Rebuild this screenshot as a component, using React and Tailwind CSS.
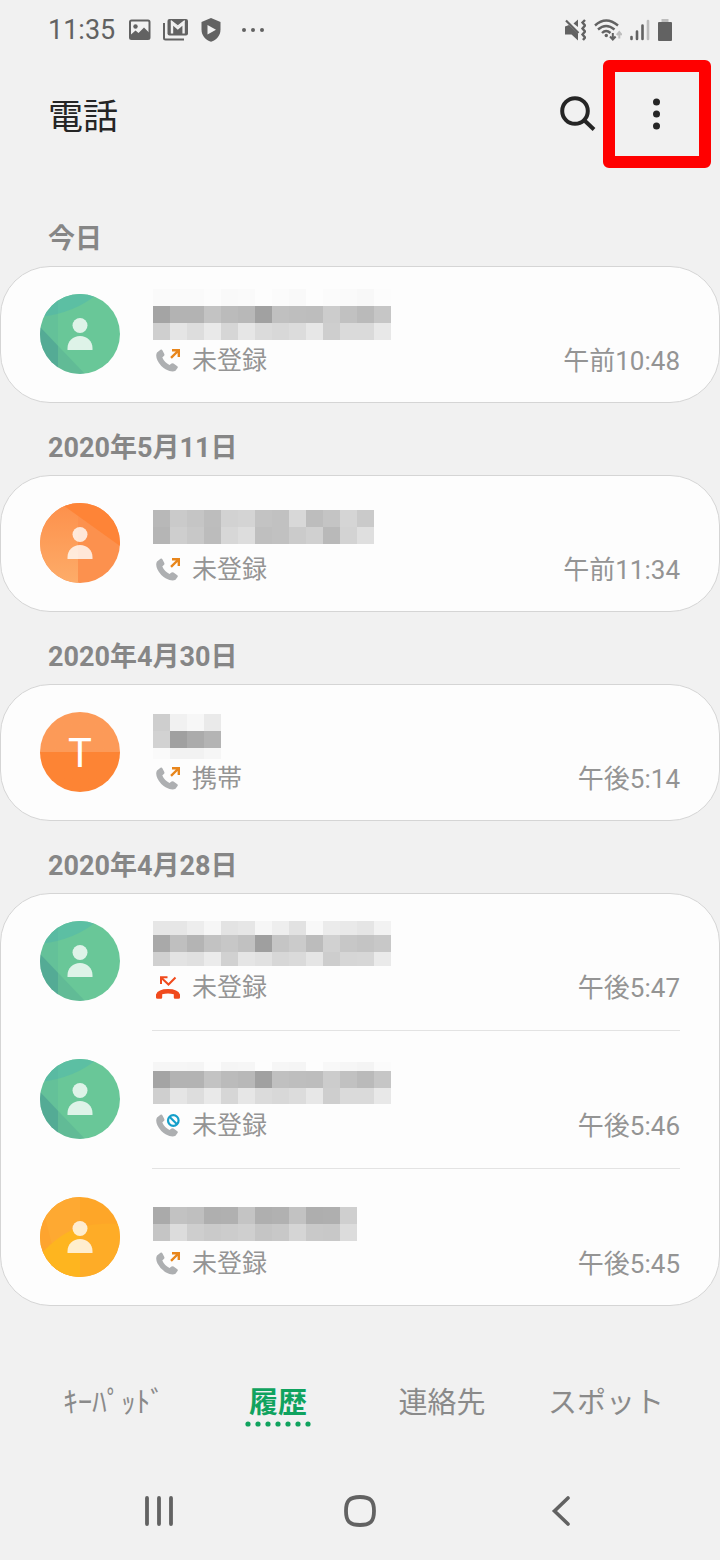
import React from "react";

// Blurred caller names: rows of grey levels, one cell is 17px wide.
// y and h are relative to the name area.
const numberMosaic = {
  dark: ["a4", "b3", "b3", "c3", "bb", "b8", "a1", "c0", "be", "bd", "cc", "c1", "ba", "c6"],
  light: ["cf", "e5", "dd", "e9", "d6", "e6", "db", "d8", "dc", "e7", "ce", "da", "da", "e8"],
};

const groups = [
  {
    title: "今日",
    calls: [
      {
        avatar: "green",
        type: "outgoing",
        label: "未登録",
        time: "午前10:48",
        mosaic: [
          { y: 0, h: 17, cells: ["fa", "fa", "fa", "fc", "f9", "fa", "fd", "fb", "f9", "fd", "fb", "fa", "f8", "fc"] },
          { y: 17, h: 17, cells: numberMosaic.dark },
          { y: 34, h: 17, cells: numberMosaic.light },
        ],
      },
    ],
  },
  {
    title: "2020年5月11日",
    calls: [
      {
        avatar: "orange",
        type: "outgoing",
        label: "未登録",
        time: "午前11:34",
        mosaic: [
          { y: 12, h: 17, cells: ["b8", "ca", "c5", "bd", "d2", "d4", "c3", "c1", "d8", "bd", "c4", "d5", "ca"] },
          { y: 29, h: 17, cells: ["b5", "ce", "c8", "bc", "d7", "dd", "bf", "c1", "cb", "d0", "b9", "d3", "df"] },
        ],
      },
    ],
  },
  {
    title: "2020年4月30日",
    calls: [
      {
        avatar: "letter",
        type: "outgoing",
        label: "携帯",
        time: "午後5:14",
        mosaic: [
          { y: 7, h: 17, cells: ["ce", "f1", "f7", "ea"] },
          { y: 24, h: 17, cells: ["d2", "a0", "ab", "b4"] },
          { y: 41, h: 11, cells: ["fa", "f2", "f2", "f6"] },
        ],
      },
    ],
  },
  {
    title: "2020年4月28日",
    calls: [
      {
        avatar: "green",
        type: "missed",
        label: "未登録",
        time: "午後5:47",
        mosaic: [
          { y: 5, h: 14, cells: ["e6", "e6", "ed", "f6", "e3", "e6", "f6", "ee", "e2", "f8", "eb", "e9", "e5", "f2"] },
          { y: 19, h: 17, cells: ["a9", "bf", "b4", "c2", "c7", "c1", "9f", "c5", "cb", "bc", "d1", "c7", "c4", "c8"] },
          { y: 36, h: 14, cells: ["d0", "e3", "e0", "eb", "d1", "e5", "e1", "d7", "da", "e5", "cd", "d6", "d7", "ea"] },
        ],
      },
      {
        avatar: "green",
        type: "blocked",
        label: "未登録",
        time: "午後5:46",
        mosaic: [
          { y: 8, h: 9, cells: ["f6", "f6", "f5", "fc", "f5", "f6", "fd", "f6", "f5", "fd", "f8", "f6", "f4", "fb"] },
          { y: 17, h: 17, cells: numberMosaic.dark },
          { y: 34, h: 16, cells: numberMosaic.light },
        ],
      },
      {
        avatar: "amber",
        type: "outgoing",
        label: "未登録",
        time: "午後5:45",
        mosaic: [
          { y: 15, h: 17, cells: ["aa", "c2", "bf", "af", "b0", "c4", "af", "b1", "c2", "ae", "af", "cf"] },
          { y: 32, h: 17, cells: ["c5", "dc", "ce", "ca", "cc", "cf", "c5", "c8", "d5", "c9", "c8", "dc"] },
        ],
      },
    ],
  },
];

const tabs = ["ｷｰﾊﾟｯﾄﾞ", "履歴", "連絡先", "スポット"];

const StatusBar = () => (
  <div className="flex h-[60px] items-center justify-between px-12 text-[#626262]">
    <div className="flex items-center gap-3">
      <span className="text-[27px]">11:35</span>
      <svg width="24" height="22" viewBox="0 0 24 22" fill="none">
        <rect x="3" y="1.500" width="19.500" height="18.500" rx="1.500" stroke="currentColor" strokeWidth="2" />
        <circle cx="8.500" cy="7.500" r="2.200" fill="currentColor" />
        <path d="M4 15.500l4.500-4 3 2.500 5.500-5.500 5 5V20H4z" fill="currentColor" />
      </svg>
      <svg width="26" height="24" viewBox="0 0 26 24" fill="none">
        <path d="M1 5v15Q1 21.500 2.500 21.500H21" stroke="currentColor" strokeWidth="2" />
        <rect x="4.500" y="1" width="20.500" height="16.500" rx="2" fill="currentColor" />
        <path d="M9 15.500V5L14.800 10.200L20.600 5V15.500" stroke="#f1f1f1" strokeWidth="2.400" />
        <path d="M8 2.800L14.800 8L21.600 2.800" stroke="#f1f1f1" strokeWidth="1.200" />
      </svg>
      <svg width="20" height="24" viewBox="0 0 20 24">
        <path d="M10 0l9.500 4v7.500c0 6-4 10.500-9.500 12.300C4.500 22 .5 17.500.5 11.500V4z" fill="currentColor" />
        <path d="M6.500 7v9.500l8.500-4.750z" fill="#f1f1f1" />
      </svg>
      <svg className="ml-2" width="24" height="6" viewBox="0 0 24 6" fill="currentColor">
        <circle cx="3" cy="3" r="2" />
        <circle cx="12" cy="3" r="2" />
        <circle cx="21" cy="3" r="2" />
      </svg>
    </div>
    <div className="flex items-center gap-2">
      <svg width="22" height="22" viewBox="0 0 22 22" fill="none">
        <path d="M1 7.500L5 6L14 14.500V21.500L7.500 15.500H1z" fill="currentColor" />
        <path d="M2 1.500L14.500 14" stroke="currentColor" strokeWidth="2.200" />
        <path d="M9.500 4.500L14 .5V8z" fill="currentColor" />
        <path d="M21 1l-2.500 2.500 2.500 3-2.500 3 2.500 3-2.500 3 2.500 3-2 2.500" stroke="currentColor" strokeWidth="2.400" />
      </svg>
      <svg width="28" height="22" viewBox="0 0 28 22" fill="none">
        <path d="M1 6.500Q12 -3.500 24 6.500M4 10.500Q12 3.500 20.500 10.500M8 14Q12 10 16.500 14" stroke="currentColor" strokeWidth="2.400" />
        <circle cx="12.300" cy="16.500" r="1.700" fill="currentColor" />
        <path d="M18.800 14v6.500M16 17.500l2.800 3 2.800-3" stroke="currentColor" strokeWidth="2" />
        <path d="M25.300 19.500v-6M22.800 16l2.500-3 2.500 3" stroke="#bdbdbd" strokeWidth="2" />
      </svg>
      <svg width="20" height="22" viewBox="0 0 20 22" strokeWidth="2.600" strokeLinecap="round">
        <path d="M1.500 18v2M7 12.500v7.500M12.500 6.500V20" stroke="currentColor" />
        <path d="M18 2V20" stroke="#bdbdbd" />
      </svg>
      <svg width="14" height="22" viewBox="0 0 14 22">
        <rect x="3.500" width="7" height="4" fill="#bdbdbd" />
        <rect y="3" width="14" height="19" rx="1" fill="currentColor" />
      </svg>
    </div>
  </div>
);

const Header = () => (
  <header className="flex items-center pl-12 pr-[9px]">
    <h1 className="flex-1 pt-2 text-[35px] text-[#252525]">電話</h1>
    <button aria-label="検索" className="mr-[7px]">
      <svg width="36" height="36" viewBox="0 0 36 36" fill="none" stroke="#252525" strokeWidth="4">
        <circle cx="15" cy="15" r="12.800" />
        <path d="M24 24l10 9.500" />
      </svg>
    </button>
    <button
      aria-label="その他のオプション"
      className="flex size-[108px] items-center justify-center rounded-md border-12 border-[#ff0000]"
    >
      <svg width="8" height="32" viewBox="0 0 8 32" fill="#252525">
        <circle cx="3.500" cy="4" r="3.500" />
        <circle cx="3.500" cy="16" r="3.500" />
        <circle cx="3.500" cy="28" r="3.500" />
      </svg>
    </button>
  </header>
);

const Person = () => (
  <g fill="#fff" fillOpacity="0.78">
    <circle cx="40" cy="31.500" r="7.500" />
    <path d="M27.500 56v-2c0-7 5.500-12 12.500-12s12.500 5 12.500 12v2z" />
  </g>
);

const Avatar = ({ kind }) => {
  if (kind === "letter") {
    return (
      <div className="flex size-20 shrink-0 items-center justify-center rounded-full bg-linear-to-b from-[#fc9a58] from-50% to-[#fd8434] to-50% pt-1 text-[40px] text-white">
        T
      </div>
    );
  }
  return (
    <svg className="size-20 shrink-0 rounded-full" viewBox="0 0 80 80">
      {kind === "green" && (
        <>
          <rect width="80" height="80" fill="#69c798" />
          <path d="M0 0H57Q35 19 0 23z" fill="#5cbfa3" />
          <path d="M0 0H18V80H0z" fill="#50a9a0" fillOpacity="0.2" />
          <path d="M0 33L45 80H0z" fill="#55ab94" fillOpacity="0.4" />
          <path d="M0 33L18 52V80H0z" fill="#4ea294" fillOpacity="0.6" />
        </>
      )}
      {kind === "orange" && (
        <>
          <defs>
            <linearGradient id="orangeLeft" x1="0" y1="0" x2="0" y2="1">
              <stop offset="0" stopColor="#fd904b" />
              <stop offset="1" stopColor="#fdac69" />
            </linearGradient>
          </defs>
          <rect width="80" height="80" fill="#fc914e" />
          <rect width="38" height="80" fill="url(#orangeLeft)" />
          <path d="M20 0L80 43V0z" fill="#fe8437" />
        </>
      )}
      {kind === "amber" && (
        <>
          <rect width="80" height="80" fill="#fea628" />
          <rect width="40" height="80" fill="#fea932" />
          <path d="M0 0L20 80H0z" fill="#fea02b" fillOpacity="0.5" />
          <path d="M0 58Q20 36 40 30V80H0z" fill="#feb51f" />
          <path d="M40 30Q60 25 80 27V80H40z" fill="#feac27" />
        </>
      )}
      <Person />
    </svg>
  );
};

const Handset = () => (
  <path
    d="M1 3.500L4.500 .8Q5.800 .2 6.500 1.500L8.300 5Q8.800 6.200 7.800 7L6.300 8.500Q8.500 13.500 13.500 16L15.500 14.500Q16.500 13.800 17.500 14.500L21 17Q22.300 18 21.500 19L19.500 21.700Q16 23.500 10 20.500Q4.500 17.500 1.500 11.500Q-.8 6.500 1 3.500z"
    fill="#adafb1"
  />
);

const CallIcon = ({ type }) => (
  <svg width="24" height="24" viewBox="0 0 24 24" fill="none" className="shrink-0">
    {type === "missed" ? (
      <>
        <path
          d="M0 21.500V18.500Q2 13 12 13T24 18.500V21.500Q24 22.800 22.500 22.800H19Q17.800 22.800 17.800 21.500V18.300Q12 16.500 6.200 18.300V21.500Q6.200 22.800 5 22.800H1.500Q0 22.800 0 21.500z"
          fill="#f04a1d"
        />
        <path d="M5 8V1.200H11.500M5 1.500L12.500 8.500L19.500 1.500" stroke="#f04a1d" strokeWidth="2" />
      </>
    ) : (
      <>
        <Handset />
        {type === "blocked" ? (
          <g stroke="#149fca" strokeWidth="2.200">
            <circle cx="17.300" cy="6.500" r="5.300" fill="#fdfdfd" />
            <path d="M13.500 2.800L21 10.200" />
          </g>
        ) : (
          <path d="M16 1.200H22.800V8M22.500 1.500L15 8.800" stroke="#e8861c" strokeWidth="2.400" />
        )}
      </>
    )}
  </svg>
);

const HiddenName = ({ rows }) => (
  <svg
    className="-mt-[5px] ml-px"
    width={rows[0].cells.length * 17}
    height="52"
    shapeRendering="crispEdges"
    aria-hidden="true"
  >
    {rows.map((row) =>
      row.cells.map((level, i) => (
        <rect key={`${row.y}-${i}`} x={i * 17} y={row.y} width="17" height={row.h} fill={`#${level}${level}${level}`} />
      ))
    )}
  </svg>
);

const CallRow = ({ call }) => (
  <div className="flex items-start gap-8 px-[39px] pt-[27px] pb-[21px]">
    <Avatar kind={call.avatar} />
    <div className="flex min-w-0 flex-1 flex-col">
      <HiddenName rows={call.mosaic} />
      <div className="flex h-10 items-center text-[#949494]">
        <span className="ml-1 mr-3">
          <CallIcon type={call.type} />
        </span>
        <span className="flex-1 text-[25px]">{call.label}</span>
        <time className="text-[26px]">{call.time}</time>
      </div>
    </div>
  </div>
);

const CallGroup = ({ group }) => (
  <section>
    <h2 className="flex h-[72px] items-end px-12 pb-2 text-[27px] leading-[38px] font-bold text-[#868686]">
      {group.title}
    </h2>
    <ul className="rounded-[50px] border border-[#d5d5d5] bg-[#fdfdfd]">
      {group.calls.map((call, i) => (
        <li key={call.time}>
          {i > 0 && <div className="my-px mr-[39px] ml-[151px] h-px bg-[#e3e3e3]" />}
          <CallRow call={call} />
        </li>
      ))}
    </ul>
  </section>
);

const Tabs = () => (
  <nav className="mt-[79px] grid grid-cols-4 px-8 text-[29px] leading-9 text-[#8a8a8a]">
    {tabs.map((tab) => {
      const active = tab === "履歴";
      return (
        <button key={tab} className="flex flex-col items-center whitespace-nowrap">
          <span className={active ? "font-bold text-[#10a35f]" : ""}>{tab}</span>
          {active && (
            <svg width="66" height="6" viewBox="0 0 66 6" fill="#10a35f">
              {[3, 13, 23, 33, 43, 53, 63].map((x) => (
                <circle key={x} cx={x} cy="3" r="2.600" />
              ))}
            </svg>
          )}
        </button>
      );
    })}
  </nav>
);

const SystemNav = () => (
  <div className="mt-[35px] grid h-[98px] grid-cols-3 place-items-center px-[58px]">
    <button aria-label="履歴アプリ">
      <svg width="32" height="32" viewBox="0 0 32 32" stroke="#626262" strokeWidth="3.800" strokeLinecap="round">
        <path d="M4 3v26M16 3v26M28 3v26" />
      </svg>
    </button>
    <button aria-label="ホーム">
      <svg width="32" height="32" viewBox="0 0 32 32" fill="none" stroke="#626262" strokeWidth="3.800">
        <path d="M16 2C26.500 2 30 5.500 30 16S26.500 30 16 30S2 26.500 2 16S5.500 2 16 2z" />
      </svg>
    </button>
    <button aria-label="戻る">
      <svg width="32" height="32" viewBox="0 0 32 32" fill="none" stroke="#626262" strokeWidth="3.600" strokeLinecap="round">
        <path d="M23 3L9.500 16L23 29" />
      </svg>
    </button>
  </div>
);

const App = () => {
  return (
    <div
      lang="ja"
      className="min-h-screen bg-[#f1f1f1] font-[Roboto,'Noto_Sans_CJK_JP',sans-serif]"
    >
      <StatusBar />
      <Header />
      <main className="pt-[26px]">
        {groups.map((group) => (
          <CallGroup key={group.title} group={group} />
        ))}
      </main>
      <Tabs />
      <SystemNav />
    </div>
  );
};

export default App;
